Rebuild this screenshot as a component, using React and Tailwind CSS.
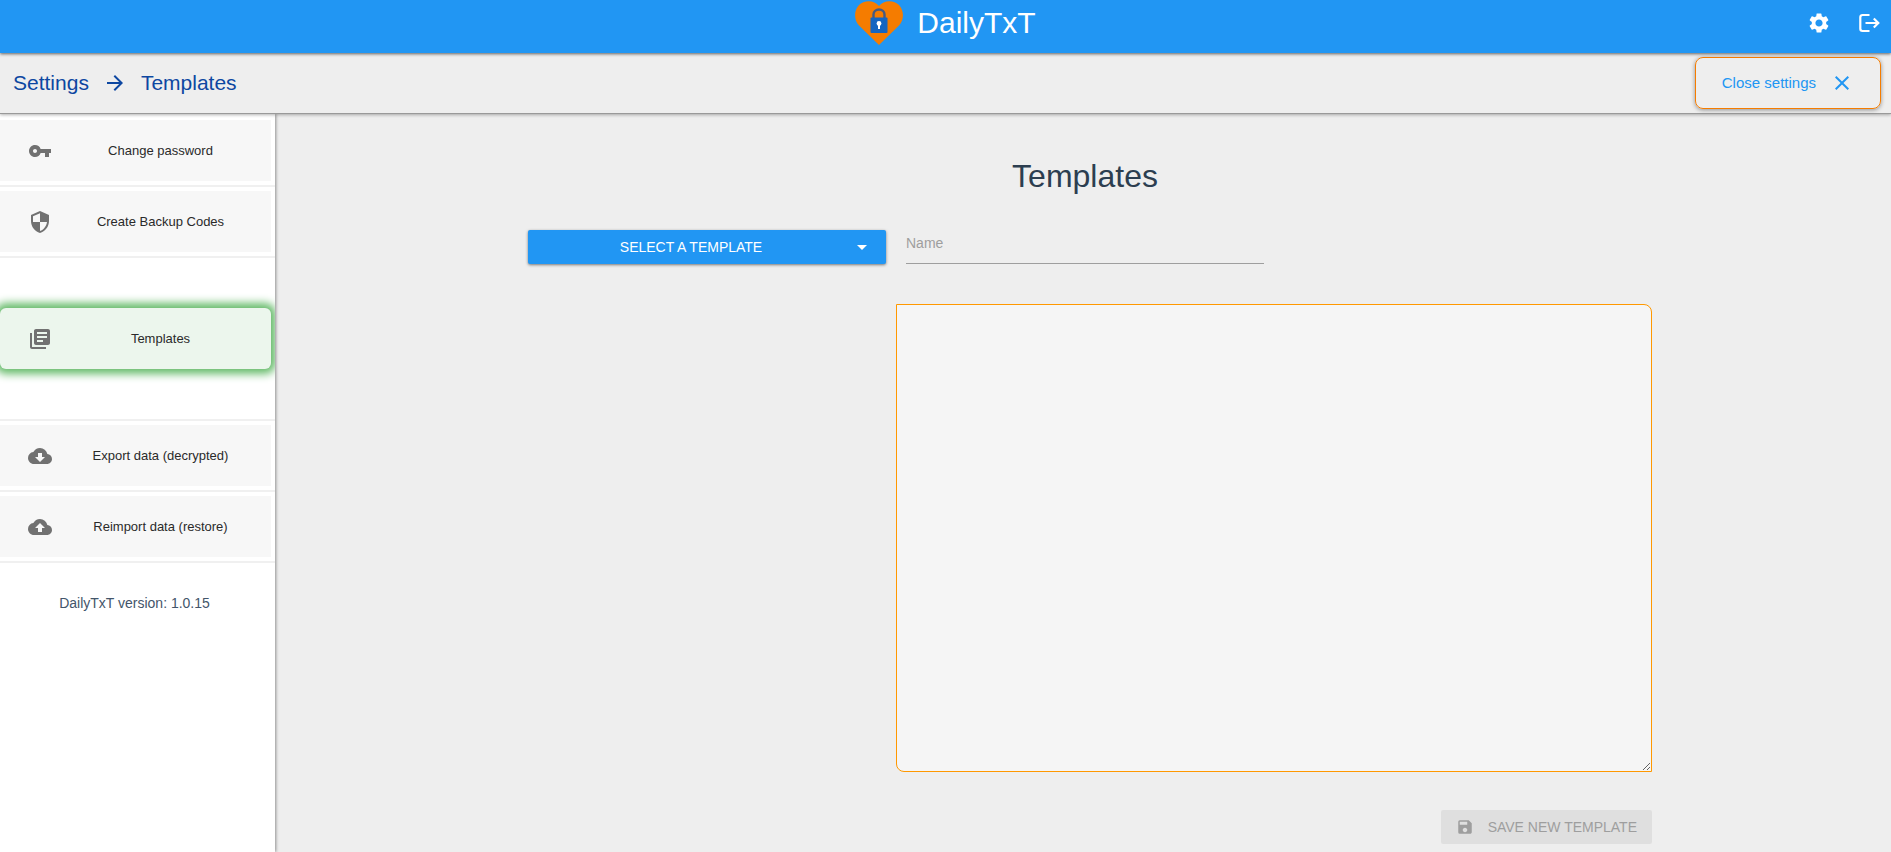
import React from "react";
import {
  MdArrowDropDown,
  MdArrowForward,
  MdClose,
  MdCloudDownload,
  MdCloudUpload,
  MdLibraryBooks,
  MdSave,
  MdSecurity,
  MdSettings,
  MdVpnKey,
} from "react-icons/md";

function Logo() {
  return (
    <svg viewBox="0 0 48 45" className="h-[45px] w-12" aria-hidden="true">
      <path
        fill="#f57c00"
        d="M24 45 4 25.500C-1.500 20 -1 10 4 5C9-.2 19.500-.2 24 6C28.500-.2 39-.2 44 5C49 10 49.500 20 44 25.500Z"
      />
      <path
        d="M18.500 18V14.500a5.500 5 0 0 1 11 0V18"
        fill="none"
        stroke="#455a80"
        strokeWidth="2.400"
      />
      <rect x="15.500" y="17.500" width="17" height="15.500" rx="1" fill="#1565c0" />
      <circle cx="24" cy="23.500" r="2.400" fill="#fff" />
      <path d="M23 24h2v5h-2z" fill="#fff" />
    </svg>
  );
}

function LogoutIcon() {
  return (
    <svg
      viewBox="0 0 24 24"
      className="size-6"
      fill="none"
      stroke="currentColor"
      strokeWidth="2.200"
      aria-hidden="true"
    >
      <path d="M12.500 4H5.500a2.200 2.200 0 0 0-2.200 2.200v11.600a2.200 2.200 0 0 0 2.200 2.200h7" />
      <path d="M8.500 12H21M16.800 7.500l4.500 4.500-4.500 4.500" />
    </svg>
  );
}

function NavItem({ icon: Icon, label, active }) {
  return (
    <a
      href="#"
      className={
        active
          ? "mr-1 flex h-[61px] items-center rounded-md bg-[#ecf6ed] text-[13px] text-[#2a2a2a] shadow-[0_0_8px_5px_#66bb6a]"
          : "mr-1 flex h-[61px] items-center bg-[#f7f7f7] text-[13px] text-[#2a2a2a]"
      }
    >
      <Icon className="ml-7 size-6 shrink-0 text-[#717171]" />
      <span className="ml-2 mr-[10px] flex-1 text-center">{label}</span>
    </a>
  );
}

function NavRow({ icon, label }) {
  return (
    <li className="border-b-2 border-[#f0f0f0] py-1">
      <NavItem icon={icon} label={label} />
    </li>
  );
}

export default function App() {
  return (
    <div className="flex min-h-screen flex-col bg-[#eee] font-['Liberation_Sans',Arial,sans-serif] text-[#2c3e50]">
      <header className="relative z-20 grid h-[53px] grid-cols-[1fr_auto_1fr] bg-[#2196f3] pb-[10px] text-white shadow-[0_1px_3px_rgba(0,0,0,0.6)]">
        <div />
        <div className="flex items-center gap-[14px]">
          <Logo />
          <span className="text-[30px] leading-10">DailyTxT</span>
        </div>
        <div className="flex items-center justify-end gap-[26px] pr-[10px]">
          <button type="button" aria-label="Settings">
            <MdSettings className="size-6" />
          </button>
          <button type="button" aria-label="Log out">
            <LogoutIcon />
          </button>
        </div>
      </header>

      <div className="relative z-10 flex h-[61px] items-center justify-between border-b border-[#999] bg-[#eee] pl-[13px] pr-[10px] shadow-[0_1px_3px_rgba(0,0,0,0.3)]">
        <nav className="flex items-center gap-[14px] text-[21px] text-[#0d47a1]">
          <a href="#">Settings</a>
          <MdArrowForward className="size-6" />
          <a href="#">Templates</a>
        </nav>
        <button
          type="button"
          className="flex h-[52px] items-center gap-[14px] rounded-lg border border-[#f57c00] px-[26px] text-[15px] text-[#2196f3] shadow-[0_1px_4px_rgba(0,0,0,0.4)]"
        >
          Close settings
          <MdClose className="size-6" />
        </button>
      </div>

      <div className="flex flex-1">
        <aside className="w-[275px] shrink-0 bg-white shadow-[1px_0_3px_rgba(0,0,0,0.4)]">
          <ul className="overflow-hidden pt-[2px]">
            <NavRow icon={MdVpnKey} label="Change password" />
            <NavRow icon={MdSecurity} label="Create Backup Codes" />
            <li className="border-b-2 border-[#f0f0f0] py-[50px]">
              <NavItem icon={MdLibraryBooks} label="Templates" active />
            </li>
            <NavRow icon={MdCloudDownload} label="Export data (decrypted)" />
            <NavRow icon={MdCloudUpload} label="Reimport data (restore)" />
          </ul>
          <p className="mt-[30px] pr-[6px] text-center text-[14px] leading-5 text-[#43556a]">
            DailyTxT version: 1.0.15
          </p>
        </aside>

        <main className="flex flex-1 flex-col items-center pl-1">
          <h1 className="mt-[42px] text-[32px] leading-10">Templates</h1>
          <div className="mt-[34px] grid w-full max-w-[1134px] grid-cols-3">
            <div className="px-[10px]">
              <button
                type="button"
                className="flex h-[34px] w-full items-center rounded-xs bg-[#2196f3] pl-1 pr-3 text-[14px] text-white shadow-[0_1px_3px_rgba(0,0,0,0.5)]"
              >
                <span className="flex-1">SELECT A TEMPLATE</span>
                <MdArrowDropDown className="size-6" />
              </button>
            </div>
            <div className="px-[10px]">
              <input
                type="text"
                aria-label="Name"
                placeholder="Name"
                className="h-[34px] w-full border-b border-[#9e9e9e] bg-transparent pb-2 text-[14px] outline-none placeholder:text-[#9e9e9e]"
              />
            </div>
            <textarea
              aria-label="Template text"
              className="col-span-2 col-start-2 mt-10 block h-[468px] w-full rounded-bl-lg rounded-tr-lg border border-[#ff9800] bg-[#f5f5f5] p-3 outline-none"
            />
            <div className="col-span-3 mt-[38px] flex justify-end">
              <button
                type="button"
                disabled
                className="flex h-[34px] items-center gap-[14px] rounded-xs bg-[#dfdfdf] px-[15px] text-[14px] text-[#9e9e9e]"
              >
                <MdSave className="size-[18px]" />
                SAVE NEW TEMPLATE
              </button>
            </div>
          </div>
        </main>
      </div>
    </div>
  );
}
